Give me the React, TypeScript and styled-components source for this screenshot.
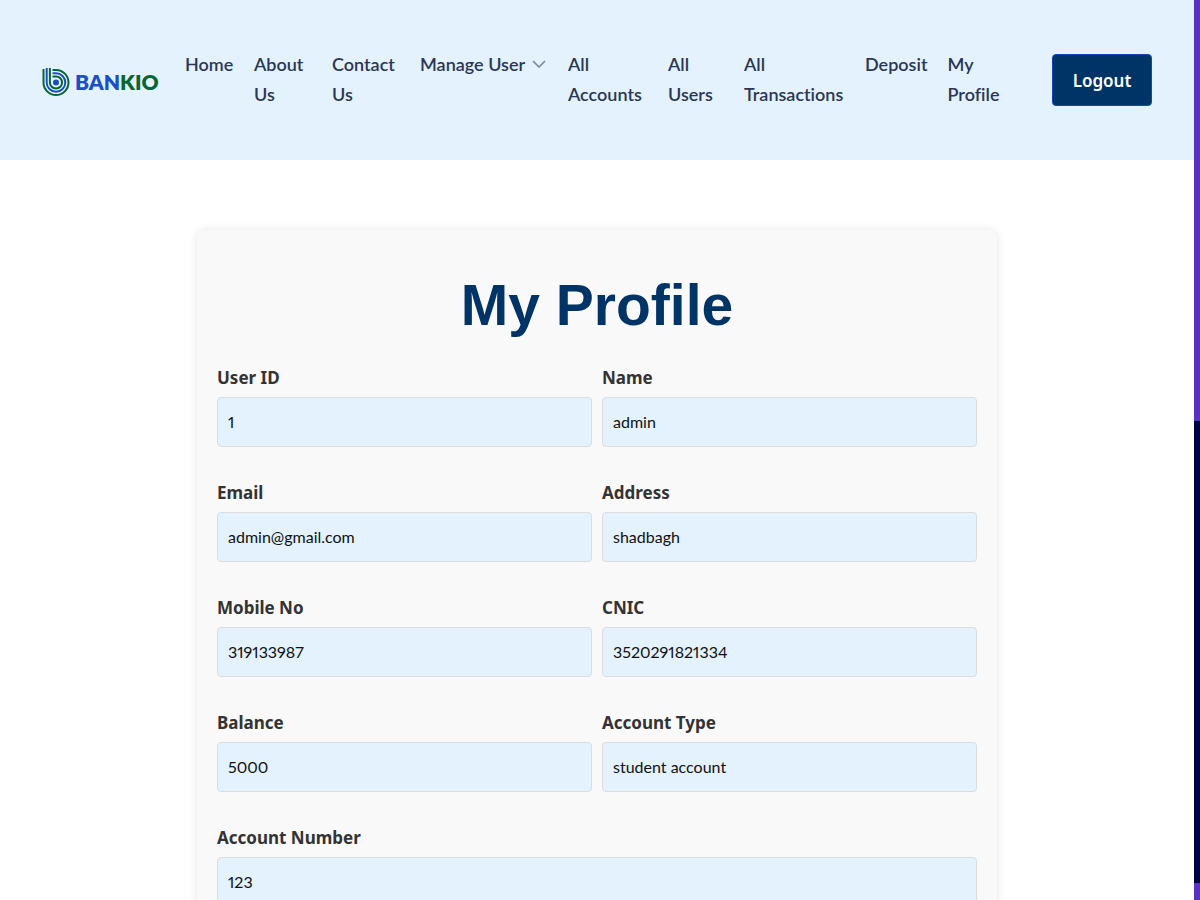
import React from "react";
import styled, { createGlobalStyle } from "styled-components";

const GlobalStyle = createGlobalStyle`
  *, *::before, *::after { box-sizing: border-box; }
  html { scrollbar-width: none; }
  body {
    margin: 0;
    padding-right: 6px;
    background: #ffffff;
    font-family: Lato, "Open Sans", sans-serif;
    font-variant-ligatures: none;
  }
`;

const ScrollTrack = styled.div`
  position: fixed;
  top: 0;
  right: 0;
  bottom: 0;
  width: 6px;
  padding-top: 421px;
  background: #5832c6;
`;

const ScrollThumb = styled.div`
  height: 462px;
  background: #020043;
`;

const Header = styled.header`
  display: flex;
  align-items: center;
  min-height: 160px;
  padding: 0 42px;
  background: #e3f2fd;
`;

const Brand = styled.a`
  display: flex;
  flex: 0 0 143px;
  align-items: center;
  gap: 5px;
  padding-top: 3px;
  color: #1d4fc4;
  font-size: 21px;
  font-weight: 800;
  line-height: 30px;
  text-decoration: none;
`;

const BrandAccent = styled.span`
  color: #0a6534;
`;

const Nav = styled.nav`
  flex: 1 1 auto;
`;

const NavList = styled.ul`
  display: flex;
  gap: 20px;
  margin: 0;
  padding: 0 0 2px;
  list-style: none;
`;

const NavItem = styled.li<{ $width: number }>`
  flex: 0 1 ${(p) => p.$width}px;
`;

const NavLink = styled.a`
  display: flex;
  align-items: center;
  gap: 7px;
  color: #2b3654;
  font-size: 18px;
  font-weight: 600;
  line-height: 30px;
  text-decoration: none;
`;

const Logout = styled.button`
  flex: 0 0 100px;
  height: 52px;
  border: 1px solid #1146b8;
  border-radius: 4px;
  background: #003366;
  color: #ffffff;
  font-family: "Noto Sans", sans-serif;
  font-size: 17px;
  font-weight: 600;
  cursor: pointer;
`;

const Card = styled.main`
  max-width: 800px;
  margin: 70px auto;
  padding: 40px 20px;
  border-radius: 8px;
  background: #f9f9f9;
  box-shadow: 0 0 10px rgba(0, 0, 0, 0.1);
`;

const Title = styled.h1`
  margin: 0 0 24px;
  color: #003366;
  font-family: "Liberation Sans", Arial, sans-serif;
  font-size: 57px;
  font-weight: 700;
  line-height: 70px;
  text-align: center;
`;

const Form = styled.form`
  display: grid;
  grid-template-columns: 1fr 1fr;
  gap: 32px 10px;
`;

const Field = styled.div<{ $wide?: boolean }>`
  display: flex;
  flex-direction: column;
  gap: 5px;
  grid-column: ${(p) => (p.$wide ? "1 / -1" : "auto")};
`;

const Label = styled.label`
  color: #333333;
  font-family: "Noto Sans", sans-serif;
  font-size: 17px;
  font-weight: 700;
  line-height: 28px;
`;

const Input = styled.input`
  width: 100%;
  height: 50px;
  padding: 0 10px 2px;
  border: 1px solid #d9dde1;
  border-radius: 4px;
  background: #e3f2fd;
  color: #111111;
  font-family: Lato, sans-serif;
  font-size: 16px;
  font-weight: 400;
  font-variant-numeric: proportional-nums;
`;

const links = [
  { text: "Home", width: 49 },
  { text: "About Us", width: 58 },
  { text: "Contact Us", width: 68 },
  { text: "Manage User", width: 128, menu: true },
  { text: "All Accounts", width: 80 },
  { text: "All Users", width: 56 },
  { text: "All Transactions", width: 101 },
  { text: "Deposit", width: 62 },
  { text: "My Profile", width: 60 },
];

const fields = [
  { id: "userId", label: "User ID", value: "1" },
  { id: "name", label: "Name", value: "admin" },
  { id: "email", label: "Email", value: "admin@gmail.com" },
  { id: "address", label: "Address", value: "shadbagh" },
  { id: "mobile", label: "Mobile No", value: "319133987" },
  { id: "cnic", label: "CNIC", value: "3520291821334" },
  { id: "balance", label: "Balance", value: "5000" },
  { id: "accountType", label: "Account Type", value: "student account" },
  { id: "accountNumber", label: "Account Number", value: "123", wide: true },
];

const Logo = () => (
  <svg width="28" height="28" viewBox="0 0 28 28" fill="none" strokeWidth="2" aria-hidden="true">
    <path d="M1.500 1V14.500A12.500 12.500 0 1 0 14 2H10.500" stroke="#0a6534" />
    <path d="M4.700 0V14.500A9.300 9.300 0 1 0 14 5.200H10.500" stroke="#1d4fc4" />
    <path d="M7.900 0V14.500A6.100 6.100 0 1 0 14 8.400H10.500" stroke="#0a6534" />
    <circle cx="14" cy="14.500" r="3" fill="#1d4fc4" />
  </svg>
);

const Chevron = () => (
  <svg width="14" height="8" viewBox="0 0 14 8" fill="none" aria-hidden="true">
    <path d="M1 1L7 7L13 1" stroke="#7785a0" strokeWidth="1.6" />
  </svg>
);

export default function App() {
  return (
    <>
      <GlobalStyle />
      <Header>
        <Brand href="#">
          <Logo />
          <span>
            BAN<BrandAccent>KIO</BrandAccent>
          </span>
        </Brand>
        <Nav>
          <NavList>
            {links.map((link) => (
              <NavItem key={link.text} $width={link.width}>
                <NavLink href="#">
                  {link.text}
                  {link.menu && <Chevron />}
                </NavLink>
              </NavItem>
            ))}
          </NavList>
        </Nav>
        <Logout type="button">Logout</Logout>
      </Header>
      <Card>
        <Title>My Profile</Title>
        <Form>
          {fields.map((field) => (
            <Field key={field.id} $wide={field.wide}>
              <Label htmlFor={field.id}>{field.label}</Label>
              <Input id={field.id} defaultValue={field.value} readOnly />
            </Field>
          ))}
        </Form>
      </Card>
      <ScrollTrack>
        <ScrollThumb />
      </ScrollTrack>
    </>
  );
}
